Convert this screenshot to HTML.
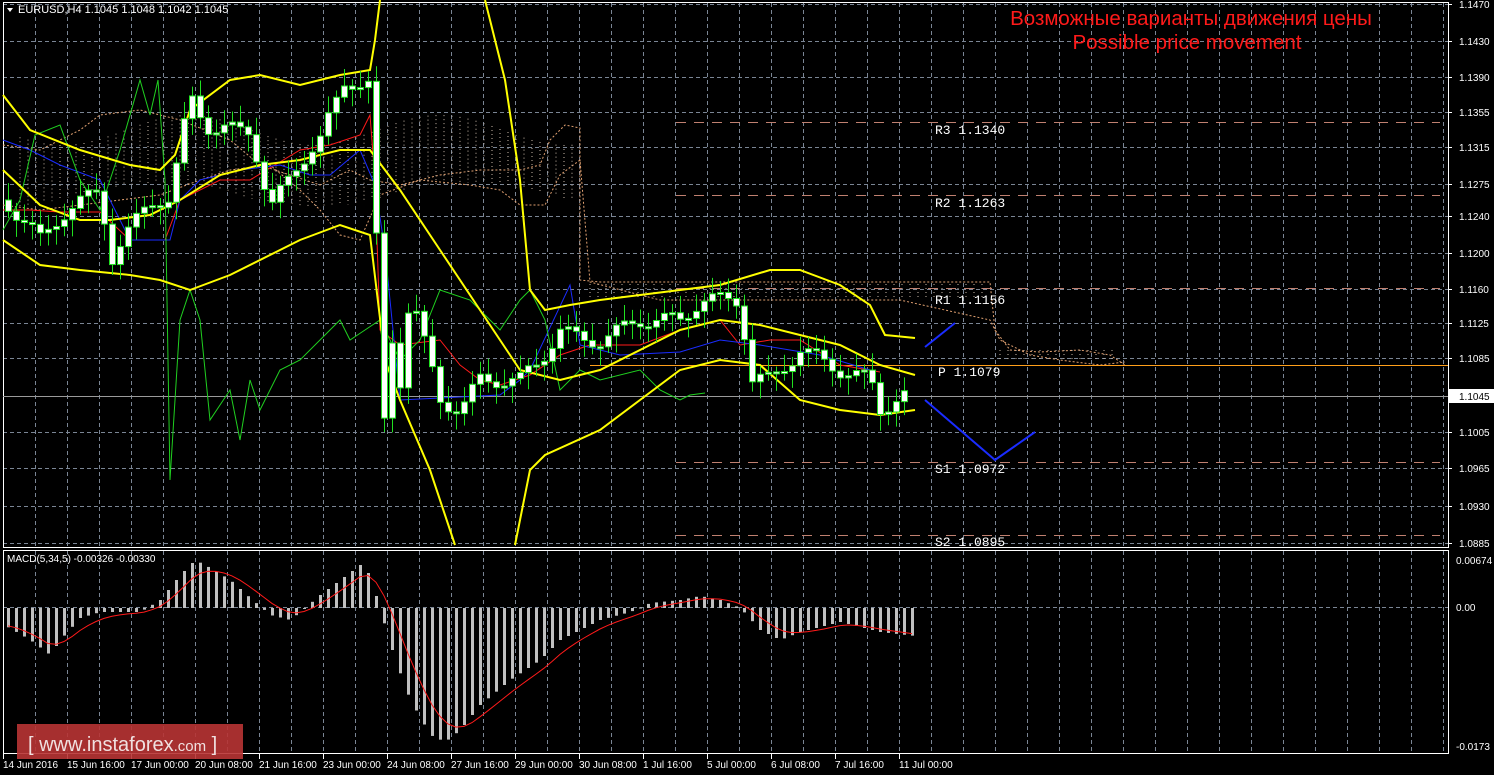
<!DOCTYPE html>
<html><head><meta charset="utf-8"><style>
html,body{margin:0;padding:0;background:#000;width:1494px;height:775px;overflow:hidden}
svg{display:block}
text{font-family:"Liberation Sans",sans-serif;font-size:10px;fill:#fff}
</style></head><body>
<svg id="s" width="1494" height="775" xmlns="http://www.w3.org/2000/svg">
<g id="grid" stroke="#7a8594" stroke-dasharray="4,3" stroke-width="1"></g>
<rect x="3.5" y="2.5" width="1445" height="545" fill="none" stroke="#fff"/>
<rect x="3.5" y="550.5" width="1445" height="203" fill="none" stroke="#fff"/>
<g id="cloud" stroke="#e0a070" stroke-width="1" stroke-dasharray="2,2" fill="none"></g>
<g stroke="#c08070" stroke-dasharray="10,8" stroke-width="1">
<line x1="676" y1="122.5" x2="1440" y2="122.5"/>
<line x1="676" y1="195.5" x2="1440" y2="195.5"/>
<line x1="676" y1="288.5" x2="1440" y2="288.5"/>
<line x1="676" y1="462.5" x2="1440" y2="462.5"/>
<line x1="676" y1="535.5" x2="1440" y2="535.5"/>
</g>
<line x1="590" y1="365.5" x2="1448" y2="365.5" stroke="#ff9f1a" stroke-width="1"/>
<line x1="3" y1="396.5" x2="1448" y2="396.5" stroke="#9a9a9a" stroke-width="1"/>
<g>
<text x="935" y="134" style="font-size:13px;font-family:'Liberation Mono',monospace">R3 1.1340</text>
<text x="935" y="207" style="font-size:13px;font-family:'Liberation Mono',monospace">R2 1.1263</text>
<text x="935" y="304" style="font-size:13px;font-family:'Liberation Mono',monospace">R1 1.1156</text>
<text x="938" y="376" style="font-size:13px;font-family:'Liberation Mono',monospace">P 1.1079</text>
<text x="935" y="473" style="font-size:13px;font-family:'Liberation Mono',monospace">S1 1.0972</text>
<text x="935" y="546" style="font-size:13px;font-family:'Liberation Mono',monospace">S2 1.0895</text>
</g>
<g id="ind" fill="none"></g>
<g id="candles"></g>
<g id="macd"></g>
<polyline points="925,347 955,323" stroke="#1a2cff" stroke-width="2" fill="none"/>
<polyline points="925,400 995,460 1035,432" stroke="#1a2cff" stroke-width="2" fill="none"/>
<path d="M7,8 L13,8 L10,12 Z" fill="#fff"/>
<text x="18" y="13" style="font-size:11px">EURUSD,H4  1.1045 1.1048 1.1042 1.1045</text>
<text x="7" y="562">MACD(5,34,5) -0.00326 -0.00330</text>
<text x="1191" y="25" text-anchor="middle" style="font-size:20.5px;fill:#ff1a1a">Возможные варианты движения цены</text>
<text x="1187" y="49" text-anchor="middle" style="font-size:20.5px;fill:#ff1a1a">Possible price movement</text>
<g id="axis"></g>
<rect x="17" y="724" width="226" height="35" fill="#b83434" fill-opacity="0.9"/>
<text x="28" y="751" style="font-size:20px;fill:#f0e0e0">[  www.instaforex<tspan style="font-size:15px">.com</tspan> ]</text>
</svg>
<script>
(function(){
var NS="http://www.w3.org/2000/svg";
function el(p,t,a){var e=document.createElementNS(NS,t);for(var k in a)e.setAttribute(k,a[k]);p.appendChild(e);return e;}
var g=document.getElementById('grid');
for(var x=35;x<1448;x+=32){el(g,'line',{x1:x+.5,y1:3,x2:x+.5,y2:547});el(g,'line',{x1:x+.5,y1:551,x2:x+.5,y2:753});}
var py=[4,41,77,112,147,184,216,253,289,323,358,432,468,506,543];
var pl=["1.1470","1.1430","1.1390","1.1355","1.1315","1.1275","1.1240","1.1200","1.1160","1.1125","1.1085","1.1005","1.0965","1.0930","1.0885"];
var ax=document.getElementById('axis');
py.forEach(function(y,i){el(g,'line',{x1:3,y1:y+.5,x2:1448,y2:y+.5});el(ax,'line',{x1:1448,y1:y+.5,x2:1452,y2:y+.5,stroke:'#fff'});var t=el(ax,'text',{x:1459,y:y+4});t.textContent=pl[i];});
el(g,'line',{x1:3,y1:607.5,x2:1448,y2:607.5});
el(ax,'rect',{x:1449,y:389,width:45,height:14,fill:'#fff'});
var t=el(ax,'text',{x:1459,y:400,style:'fill:#000'});t.textContent="1.1045";
[[564,"0.00674"],[611,"0.00"],[750,"-0.0173"]].forEach(function(a){var t=el(ax,'text',{x:1456,y:a[0]});t.textContent=a[1];});
var dl=["14 Jun 2016","15 Jun 16:00","17 Jun 00:00","20 Jun 08:00","21 Jun 16:00","23 Jun 00:00","24 Jun 08:00","27 Jun 16:00","29 Jun 00:00","30 Jun 08:00","1 Jul 16:00","5 Jul 00:00","6 Jul 08:00","7 Jul 16:00","11 Jul 00:00"];
dl.forEach(function(s,i){var x=3+64*i;el(ax,'line',{x1:x+.5,y1:754,x2:x+.5,y2:759,stroke:'#fff'});var t=el(ax,'text',{x:x,y:768});t.textContent=s;});
function pl2(p,pts,c,w){el(p,'polyline',{points:pts,stroke:c,'stroke-width':w,fill:'none'});}
var ind=document.getElementById('ind');
var cl=document.getElementById('cloud');
pl2(cl,"3,145 40,150 80,130 100,115 140,110 180,120 230,140 260,165 290,175 320,185 350,170 370,180 400,185 440,175 480,170 520,170 540,165 550,140 565,125 580,128 580,280 600,282 700,282 800,282 900,282 990,282 995,330 1010,350 1040,352 1080,350 1110,355 1125,365","#e0a070",1);
pl2(cl,"3,205 40,210 80,205 120,200 160,195 200,180 230,170 270,165 300,190 320,210 340,235 360,240 380,195 420,180 470,185 500,190 520,205 545,205 560,175 580,160 590,282 660,300 740,300 820,300 900,300 990,320 1000,340 1030,355 1060,360 1100,365 1125,362","#e0a070",1);
var cg=el(cl,'g',{stroke:'#c8b8a8','stroke-dasharray':'1,3'});
for(var x=20;x<580;x+=8){el(cg,'line',{x1:x,y1:130+Math.sin(x/40)*15,x2:x,y2:195+Math.cos(x/50)*12});}
for(var x=590;x<990;x+=8){el(cg,'line',{x1:x,y1:284,x2:x,y2:300});}
for(var x=1000;x<1120;x+=8){el(cg,'line',{x1:x,y1:350,x2:x,y2:362});}
pl2(ind,"3,210 30,210 60,212 100,212 130,240 165,240 180,200 220,180 250,180 300,150 330,145 360,135 370,115 375,180 380,330 400,345 440,340 460,365 480,380 500,385 530,375 560,355 590,345 640,345 680,330 720,320 740,345 770,340 800,340 840,365 880,372","#ff1a1a",1);
pl2(ind,"3,140 30,150 60,165 100,180 130,240 170,240 180,200 200,180 240,170 280,165 310,175 330,175 360,150 375,185 385,250 400,400 500,395 520,380 530,370 570,285 580,345 620,355 680,352 720,340 760,345 820,355 870,370","#1a2cff",1);
pl2(ind,"3,230 20,200 35,135 60,125 80,180 100,210 120,150 140,80 150,115 158,80 165,180 170,480 180,320 190,290 200,320 210,420 230,390 240,440 250,380 260,410 280,370 300,360 340,320 350,340 365,330 380,320 400,360 420,340 440,290 470,300 490,320 500,330 520,300 530,290 545,320 560,390 580,370 600,380 640,370 660,390 680,400 690,395 705,393","#20d020",1);
var Y="#ffff00";
pl2(ind,"3,95 30,130 80,150 130,165 160,170 175,155 190,110 230,80 260,75 300,85 340,75 370,70 375,40 380,0",Y,2);
pl2(ind,"3,170 40,205 80,220 110,220 150,215 180,200 220,175 260,165 300,160 340,150 370,150 400,190 440,250 480,310 520,370 560,380 600,370 640,350 680,330 720,320 760,325 800,335 840,345 880,365 915,375",Y,2);
pl2(ind,"3,240 40,265 80,270 130,275 160,280 190,290 230,275 270,255 300,240 340,225 370,235 385,360 400,400 430,470 455,545",Y,2);
pl2(ind,"485,0 505,80 520,180 530,290 545,310 570,305 600,300 640,295 680,290 720,285 770,270 800,270 840,285 870,305 885,335 915,338",Y,2);
pl2(ind,"515,545 530,470 545,455 600,430 640,400 680,370 720,360 760,365 800,400 840,410 880,415 915,410",Y,2);
var kp=[[4,200],[40,240],[60,215],[100,190],[110,260],[130,230],[150,200],[170,200],[190,95],[210,130],[250,130],[270,210],[300,160],[320,140],[345,80],[370,85],[375,180],[380,485],[390,330],[400,380],[410,290],[420,330],[440,400],[460,410],[480,380],[500,380],[520,380],[540,360],[560,330],[580,340],[600,340],[640,320],[680,320],[700,300],[740,300],[750,380],[770,380],[800,350],[840,370],[870,380],[880,410],[900,395],[910,395]];
function at(x){for(var i=1;i<kp.length;i++){if(x<=kp[i][0]){var a=kp[i-1],b=kp[i];return a[1]+(b[1]-a[1])*(x-a[0])/(b[0]-a[0]);}}return 395;}
var cd=document.getElementById('candles');var prev=at(4);
for(var x=8;x<=910;x+=8){var c=at(x)+Math.sin(x*1.7)*8;var o=prev;var tp=Math.min(o,c),bt=Math.max(o,c);if(bt-tp<2)bt=tp+2;
el(cd,'line',{x1:x+.5,y1:tp-5-Math.abs(Math.sin(x))*12,x2:x+.5,y2:bt+5+Math.abs(Math.cos(x))*12,stroke:'#20e020'});
el(cd,'rect',{x:x-2.5,y:tp,width:6,height:bt-tp,fill:'#fff',stroke:'#20e020'});prev=c;}
var hp=[[4,625],[30,640],[50,655],[60,640],[80,618],[100,612],[140,612],[160,600],[180,575],[195,560],[210,568],[230,580],[250,598],[270,615],[290,620],[300,612],[320,595],[340,580],[360,565],[370,575],[380,610],[395,660],[410,700],[430,735],[445,742],[460,730],[480,705],[510,680],[540,660],[560,640],[600,620],[630,612],[650,603],[680,600],[700,596],[720,600],[740,608],[760,630],[780,640],[800,632],[840,622],[880,632],[915,636]];
function hat(x){for(var i=1;i<hp.length;i++){if(x<=hp[i][0]){var a=hp[i-1],b=hp[i];return a[1]+(b[1]-a[1])*(x-a[0])/(b[0]-a[0]);}}return 636;}
var mg=document.getElementById('macd');var sig=[];var s=625;
for(var x=8;x<=915;x+=8){var v=hat(x);var y0=Math.min(v,608),y1=Math.max(v,608);el(mg,'rect',{x:x-1,y:y0,width:3,height:Math.max(1,y1-y0),fill:'#c0c0c0'});s=s+(v-s)*0.33;sig.push(x+','+s.toFixed(1));}
pl2(mg,sig.join(' '),'#ff1a1a',1);
})();
</script>
</body></html>
